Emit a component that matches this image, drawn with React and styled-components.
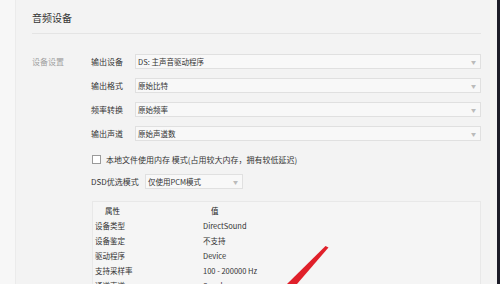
import React from "react";
import styled, { createGlobalStyle } from "styled-components";

const Global = createGlobalStyle`
  html, body {
    margin: 0;
    padding: 0;
    background: #f3f3f3;
  }
  body {
    font-family: "Noto Sans CJK SC", "Liberation Sans", sans-serif;
    color: #333;
  }
`;

const Window = styled.div`
  position: relative;
  width: 500px;
  height: 284px;
  overflow: hidden;
  display: flex;
  background: #f3f3f3;
`;

const SideStrip = styled.div`
  width: 15px;
  flex: none;
  background: #f7f7f7;
  border-right: 1px solid #ebebeb;
`;

const Main = styled.div`
  flex: 1;
  padding: 0 16px 0 16px;
  display: flex;
  flex-direction: column;
`;

const EdgeBar = styled.div`
  width: 3px;
  flex: none;
  background: #1c1c28;
`;

const Header = styled.div`
  height: 34px;
  flex: none;
  box-sizing: border-box;
  padding-top: 11px;
  border-bottom: 1px solid #e4e4e4;
  font-size: 10px;
  line-height: 14px;
  color: #333;
`;

const Section = styled.div`
  display: flex;
  margin-top: 20px;
`;

const SectionLabel = styled.div`
  width: 59px;
  flex: none;
  font-size: 8px;
  line-height: 15px;
  color: #a0a0a0;
`;

const SectionBody = styled.div`
  flex: 1;
  display: flex;
  flex-direction: column;
`;

const FieldRow = styled.div`
  display: flex;
  align-items: center;
  height: 15px;
  margin-bottom: 9px;
`;

const FieldLabel = styled.div`
  width: ${(p) => p.$w || 44}px;
  flex: none;
  font-size: 8px;
  line-height: 15px;
  color: #333;
  white-space: nowrap;
`;

const Select = styled.div`
  position: relative;
  box-sizing: border-box;
  height: 15px;
  width: ${(p) => (p.$w ? p.$w + "px" : "auto")};
  flex: ${(p) => (p.$w ? "none" : "1")};
  background: #f8f8f8;
  border: 1px solid #e0e0e0;
  padding-left: 2px;
  font-size: 7.5px;
  line-height: 13px;
  color: #333;
  white-space: nowrap;
`;

const Caret = styled.span`
  position: absolute;
  right: 4px;
  top: 0;
  font-size: 5px;
  line-height: 13px;
  color: #bbb;
`;

const CheckRow = styled.div`
  display: flex;
  align-items: center;
  height: 9px;
  margin-top: 5px;
  margin-left: 1px;
  font-size: 8px;
  color: #333;
  white-space: nowrap;
`;

const Box = styled.span`
  width: 7px;
  height: 7px;
  border: 1px solid #9a9a9a;
  background: #fff;
  margin-right: 5px;
`;

const DsdRow = styled(FieldRow)`
  margin-top: 10px;
  margin-bottom: 0;
`;

const Table = styled.div`
  margin-top: 12px;
  margin-left: 1px;
  background: #f5f5f5;
  border: 1px solid #e8e8e8;
  padding-top: 1px;
  height: 120px;
`;

const TRow = styled.div`
  display: flex;
  height: 15px;
  align-items: center;
  font-size: 7.5px;
  color: ${(p) => (p.$head ? "#222" : "#333")};
`;

const TKey = styled.div`
  width: ${(p) => (p.$head ? 98 : 108)}px;
  padding-left: ${(p) => (p.$head ? 12 : 2)}px;
  flex: none;
`;

const TVal = styled.div`
  flex: 1;
  padding-left: ${(p) => (p.$head ? 8 : 0)}px;
`;

const Arrow = styled.svg`
  position: absolute;
  left: 0;
  top: 0;
  pointer-events: none;
`;

const fields = [
  ["输出设备", "DS: 主声音驱动程序"],
  ["输出格式", "原始比特"],
  ["频率转换", "原始频率"],
  ["输出声道", "原始声道数"],
];

const props = [
  ["设备类型", "DirectSound"],
  ["设备鉴定", "不支持"],
  ["驱动程序", "Device"],
  ["支持采样率", "100 - 200000 Hz"],
  ["通道声道", "Speakers"],
];

export default function App() {
  return (
    <>
      <Global />
      <Window>
        <SideStrip />
        <Main>
          <Header>音频设备</Header>
          <Section>
            <SectionLabel>设备设置</SectionLabel>
            <SectionBody>
              {fields.map(([label, value]) => (
                <FieldRow key={label}>
                  <FieldLabel>{label}</FieldLabel>
                  <Select>
                    {value}
                    <Caret>▼</Caret>
                  </Select>
                </FieldRow>
              ))}
              <CheckRow>
                <Box />
                本地文件使用内存 模式(占用较大内存，拥有较低延迟)
              </CheckRow>
              <DsdRow>
                <FieldLabel $w={54}>DSD优选模式</FieldLabel>
                <Select $w={98}>
                  仅使用PCM模式
                  <Caret>▼</Caret>
                </Select>
              </DsdRow>
              <Table>
                <TRow $head>
                  <TKey $head>属性</TKey>
                  <TVal $head>值</TVal>
                </TRow>
                {props.map(([k, v]) => (
                  <TRow key={k}>
                    <TKey>{k}</TKey>
                    <TVal>{v}</TVal>
                  </TRow>
                ))}
              </Table>
            </SectionBody>
          </Section>
        </Main>
        <EdgeBar />
        <Arrow width="500" height="284" viewBox="0 0 500 284">
          <polygon points="325.5,246 328.5,247.5 297,284 287,284" fill="#e0202a" />
        </Arrow>
      </Window>
    </>
  );
}
